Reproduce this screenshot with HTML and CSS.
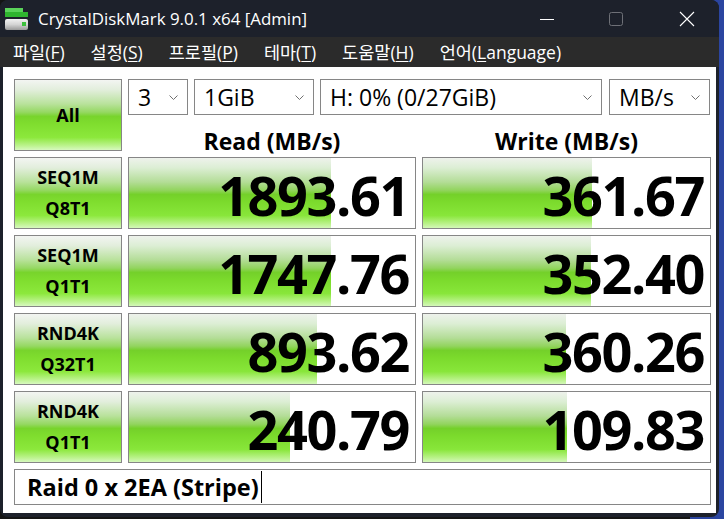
FILE: index.html
```html
<!DOCTYPE html>
<html lang="ko">
<head>
<meta charset="utf-8">
<title>CrystalDiskMark 9.0.1 x64 [Admin]</title>
<link rel="stylesheet" href="styles.css">
</head>
<body>
<div class="window">
  <div class="titlebar">
    <svg class="app-icon" width="24" height="24" viewBox="0 0 24 24">
      <defs>
        <linearGradient id="disk" x1="0" y1="0" x2="0" y2="1">
          <stop offset="0" stop-color="#f2f2f2"/>
          <stop offset="0.5" stop-color="#d4d4d4"/>
          <stop offset="1" stop-color="#9a9a9a"/>
        </linearGradient>
      </defs>
      <rect x="0" y="1" width="18" height="4" fill="#5ad35a"/>
      <rect x="0" y="5" width="23" height="5" fill="#2fb52f"/>
      <rect x="0" y="12" width="23" height="11" rx="2" fill="url(#disk)"/>
      <rect x="17" y="15" width="4" height="4" fill="#3cbf3c"/>
    </svg>
    <span class="title">CrystalDiskMark 9.0.1 x64 [Admin]</span>
    <div class="controls">
      <svg width="16" height="16" viewBox="0 0 16 16"><path d="M1 8.5 H15" stroke="#ffffff" stroke-width="1"/></svg>
      <svg class="ctl-max" width="16" height="16" viewBox="0 0 16 16"><rect x="1.5" y="1.5" width="13" height="13" rx="2" fill="none" stroke="#6e7077" stroke-width="1"/></svg>
      <svg class="ctl-close" width="16" height="16" viewBox="0 0 16 16"><path d="M1 1 L15 15 M15 1 L1 15" stroke="#ffffff" stroke-width="1.1"/></svg>
    </div>
  </div>
  <div class="menubar">
    <span class="menu">파일(<u>F</u>)</span>
    <span class="menu">설정(<u>S</u>)</span>
    <span class="menu">프로필(<u>P</u>)</span>
    <span class="menu">테마(<u>T</u>)</span>
    <span class="menu">도움말(<u>H</u>)</span>
    <span class="menu">언어(<u>L</u>anguage)</span>
  </div>
  <div class="client">
    <div class="grid">
      <div class="btn all">All</div>
      <div class="top-area">
        <div class="selects">
          <div class="select s-count"><span>3</span><svg width="9" height="5" viewBox="0 0 9 5"><path d="M0.5 0.5 L4.5 4.5 L8.5 0.5" stroke="#707070" fill="none"/></svg></div>
          <div class="select s-size"><span>1GiB</span><svg width="9" height="5" viewBox="0 0 9 5"><path d="M0.5 0.5 L4.5 4.5 L8.5 0.5" stroke="#707070" fill="none"/></svg></div>
          <div class="select s-drive"><span>H: 0% (0/27GiB)</span><svg width="9" height="5" viewBox="0 0 9 5"><path d="M0.5 0.5 L4.5 4.5 L8.5 0.5" stroke="#707070" fill="none"/></svg></div>
          <div class="select s-unit"><span>MB/s</span><svg width="9" height="5" viewBox="0 0 9 5"><path d="M0.5 0.5 L4.5 4.5 L8.5 0.5" stroke="#707070" fill="none"/></svg></div>
        </div>
        <div class="headers">
          <div class="head">Read (MB/s)</div>
          <div class="head">Write (MB/s)</div>
        </div>
      </div>

      <div class="btn label">SEQ1M<br>Q8T1</div>
      <div class="cell" style="--fill:202px">1893.61</div>
      <div class="cell" style="--fill:169px">361.67</div>

      <div class="btn label">SEQ1M<br>Q1T1</div>
      <div class="cell" style="--fill:202px">1747.76</div>
      <div class="cell" style="--fill:168px">352.40</div>

      <div class="btn label">RND4K<br>Q32T1</div>
      <div class="cell" style="--fill:188px">893.62</div>
      <div class="cell" style="--fill:143px">360.26</div>

      <div class="btn label">RND4K<br>Q1T1</div>
      <div class="cell" style="--fill:161px">240.79</div>
      <div class="cell" style="--fill:144px">109.83</div>

      <div class="comment">Raid 0 x 2EA (Stripe)<span class="caret"></span></div>
    </div>
  </div>
</div>
</body>
</html>
```
FILE: styles.css
```css
html, body {
  margin: 0;
  padding: 0;
}
body {
  width: 724px;
  height: 519px;
  overflow: hidden;
  background: linear-gradient(to right, #141414 0, #141414 690px, #2b45a0 690px);
  font-family: "Open Sans", "Noto Sans CJK KR", sans-serif;
}
.window {
  width: 719px;
  height: 517px;
  border-radius: 8px;
  overflow: hidden;
  background: #1d212b;
  display: flex;
  flex-direction: column;
}
.titlebar {
  height: 37px;
  display: flex;
  align-items: center;
  background: #1d212b;
  color: #ffffff;
  flex: none;
}
.app-icon {
  margin-left: 5px;
  margin-right: 9px;
  flex: none;
}
.title {
  font-size: 16.9px;
}
.controls {
  margin-left: auto;
  display: flex;
  align-items: center;
  margin-right: 24px;
}
.controls svg { display: block; }
.ctl-max { margin-left: 53px; }
.ctl-close { margin-left: 55px; }

.menubar {
  box-sizing: border-box;
  height: 30px;
  background: #2b2b2b;
  color: #ffffff;
  display: flex;
  align-items: center;
  padding-left: 0;
  padding-top: 1px;
  font-size: 17.5px;
  flex: none;
}
.menu {
  padding: 0 13px;
  white-space: nowrap;
  line-height: 1;
}
.menu u {
  text-underline-offset: 2px;
}

.client {
  flex: 1;
  background: #ffffff;
  margin: 0 3px 4px 3px;
  padding: 12px 0 0 11px;
}
.grid {
  display: grid;
  grid-template-columns: 108px 288px 289px;
  grid-template-rows: 72px 72px 72px 72px 72px 36px;
  gap: 6px;
}
.btn, .cell, .select, .comment {
  box-sizing: border-box;
  border: 1px solid #868686;
}
.btn {
  display: flex;
  align-items: center;
  justify-content: center;
  text-align: center;
  font-weight: 700;
  color: #000;
  background: linear-gradient(to bottom, #f3f5f2 0%, #e2eedc 14%, #b9e29c 34%, #95d862 46%, #78d42c 52%, #7fdd2e 62%, #8ce83c 82%, #b9f288 93%, #d7f9bf 100%);
}
.all {
  font-size: 18px;
}
.label {
  font-size: 18px;
  line-height: 31px;
  padding-top: 0;
}
.top-area {
  grid-column: 2 / 4;
  display: flex;
  flex-direction: column;
}
.selects {
  display: flex;
  height: 36px;
  gap: 6px;
}
.select {
  height: 36px;
  display: flex;
  align-items: center;
  justify-content: space-between;
  padding: 0 9px 0 9px;
  font-size: 23px;
  color: #000;
  background: #fff;
}
.select span { line-height: 1; }
.select svg { display: block; margin-top: 1px; }
.s-count { width: 60px; }
.s-size { width: 120px; }
.s-drive { width: 282px; }
.s-unit { width: 101px; margin-left: 1px; }
.headers {
  display: grid;
  grid-template-columns: 288px 289px;
  gap: 6px;
  flex: 1;
}
.head {
  display: flex;
  align-items: center;
  justify-content: center;
  font-size: 23px;
  font-weight: 700;
  padding-top: 15px;
  line-height: 1;
}
.cell {
  display: flex;
  align-items: center;
  justify-content: flex-end;
  padding: 3px 6px 0 0;
  font-size: 54px;
  font-weight: 700;
  letter-spacing: -1.4px;
  color: #000;
  background-color: #fff;
  background-image: linear-gradient(to bottom, #eef2ec 0%, #dceed4 14%, #b4dd98 34%, #92d45e 46%, #74d02a 52%, #7bda2c 62%, #88e63a 82%, #b6f184 93%, #d3f8b8 100%);
  background-repeat: no-repeat;
  background-size: var(--fill) 100%;
  line-height: 1;
}
.comment {
  grid-column: 1 / 4;
  display: flex;
  align-items: center;
  padding-left: 12px;
  font-size: 23.5px;
  font-weight: 700;
  color: #000;
  background: #fff;
}
.caret {
  display: inline-block;
  width: 1px;
  height: 32px;
  background: #000;
  margin-left: 2px;
}
```
